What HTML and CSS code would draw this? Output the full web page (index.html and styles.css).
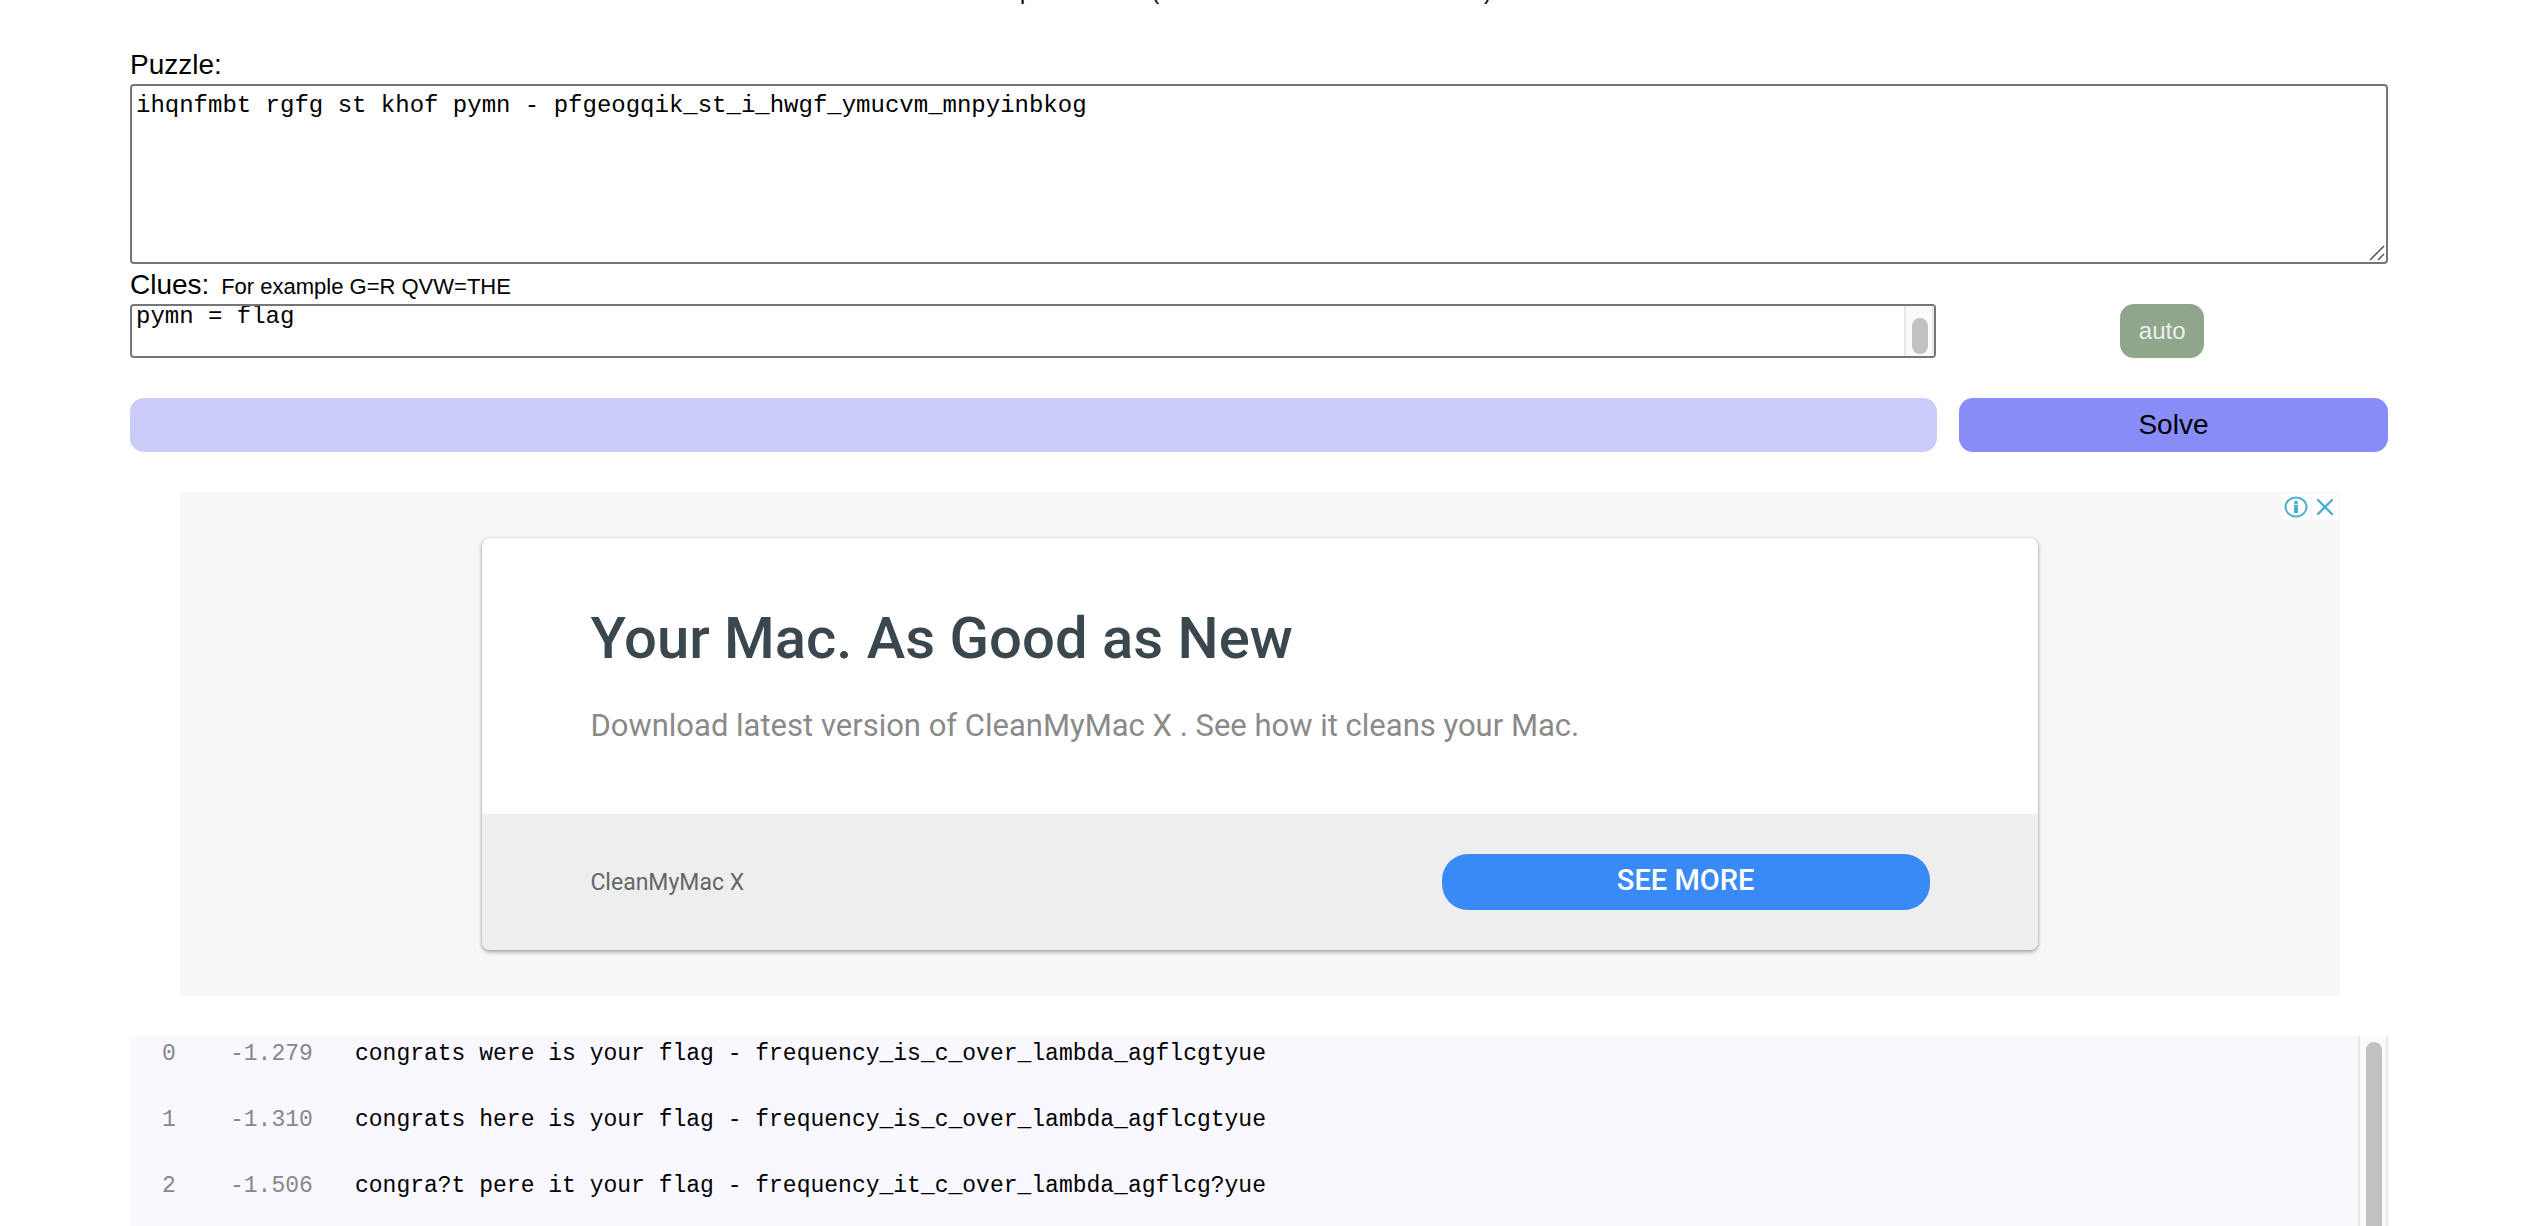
FILE: index.html
```html
<!DOCTYPE html>
<html lang="en">
<head>
<meta charset="utf-8">
<meta name="viewport" content="width=device-width, initial-scale=1">
<title>Cryptogram solver</title>
<link rel="stylesheet" href="styles.css">
</head>
<body>
<main class="page">
  <header class="intro"><p class="intro-text">patristocrats (inwhi chwor dboun darie saren t).</p></header>

  <form class="solver">
    <label class="label" for="puzzle">Puzzle:</label>
    <div class="field">
      <textarea class="input input-puzzle" id="puzzle" spellcheck="false">ihqnfmbt rgfg st khof pymn - pfgeogqik_st_i_hwgf_ymucvm_mnpyinbkog</textarea>
      <svg class="grip" viewBox="0 0 16 16" aria-hidden="true"><path d="M1 15 15 1M9 15l6-6" fill="none" stroke="#555" stroke-width="1.500"/></svg>
    </div>
    <label class="label" for="clues">Clues: <span class="hint">For example G=R QVW=THE</span></label>
    <div class="clue-row">
      <div class="field">
        <textarea class="input input-clues" id="clues" spellcheck="false">pymn = flag</textarea>
        <span class="scroll scroll-clues" aria-hidden="true"><span class="thumb"></span></span>
      </div>
      <button class="auto" type="button">auto</button>
    </div>
    <div class="solve-row">
      <div class="progress" role="progressbar" aria-label="Progress"></div>
      <button class="solve" type="button">Solve</button>
    </div>
  </form>

  <aside class="ad">
    <div class="ad-tools">
      <button class="ad-tool" type="button" aria-label="Ad information"><svg viewBox="0 0 28 26"><ellipse cx="14" cy="13" rx="10.500" ry="9.500" fill="none" stroke="#4bb0ce" stroke-width="2"/><circle cx="14" cy="8.500" r="2" fill="#4bb0ce"/><path d="M12 11h4v8h-4z" fill="#4bb0ce"/></svg></button>
      <button class="ad-tool ad-close" type="button" aria-label="Close ad"><svg viewBox="0 0 26 26"><path d="M6 6l14 14M20 6 6 20" fill="none" stroke="#4bb0ce" stroke-width="2.400" stroke-linecap="round"/></svg></button>
    </div>
    <div class="card">
      <div class="card-body">
        <h2 class="card-title">Your Mac. As Good as New</h2>
        <p class="card-text">Download latest version of CleanMyMac X . See how it cleans your Mac.</p>
      </div>
      <div class="card-foot">
        <span class="brand">CleanMyMac X</span>
        <a class="more" href="#">SEE MORE</a>
      </div>
    </div>
  </aside>

  <section class="results">
    <table class="table">
      <tr><td class="rank">0</td><td class="score">-1.279</td><td>congrats were is your flag - frequency_is_c_over_lambda_agflcgtyue</td></tr>
      <tr><td class="rank">1</td><td class="score">-1.310</td><td>congrats here is your flag - frequency_is_c_over_lambda_agflcgtyue</td></tr>
      <tr><td class="rank">2</td><td class="score">-1.506</td><td>congra?t pere it your flag - frequency_it_c_over_lambda_agflcg?yue</td></tr>
    </table>
    <span class="scroll scroll-results" aria-hidden="true"><span class="thumb"></span></span>
  </section>
</main>
</body>
</html>
```

FILE: styles.css
```css
* { box-sizing: border-box; }

body {
  margin: 0;
  background: #fff;
  color: #000;
  font-family: "Liberation Sans", Arial, sans-serif;
  font-size: 28px;
}

.page {
  display: flex;
  flex-direction: column;
  height: 100vh;
  padding: 0 156px 0 130px;
  overflow: hidden;
}

/* Only the tail of the introduction shows at this scroll position. */
.intro {
  display: flex;
  flex: none;
  align-items: flex-end;
  justify-content: center;
  height: 4px;
  margin-bottom: 44px;
  overflow: hidden;
}
.intro-text { margin: 0; font-size: 23px; line-height: 26px; }

.solver { flex: none; }
.label { display: block; height: 36px; line-height: 34px; }
.label[for="clues"] { height: 40px; padding-top: 4px; }
.hint { margin-left: 4px; font-size: 22px; }

.field { position: relative; display: flex; }
.input {
  display: block;
  width: 100%;
  margin: 0;
  border: 2px solid #767676;
  border-radius: 4px;
  background: #fff;
  color: #000;
  font-family: "Liberation Mono", "Courier New", monospace;
  font-size: 24px;
  resize: none;
  overflow: hidden;
}
.input-puzzle { height: 180px; padding: 6px 4px; line-height: 28px; }
.input-clues { height: 54px; padding: 0 4px; line-height: 22px; }
.grip { position: absolute; right: 3px; bottom: 3px; width: 16px; height: 16px; }

.scroll {
  position: absolute;
  display: flex;
  border: 2px solid #e8e8e8;
  border-width: 0 2px;
  background: #fafafa;
}
.scroll .thumb { width: 16px; border-radius: 8px; background: #c1c1c1; }
.scroll-clues { top: 2px; right: 2px; bottom: 2px; padding: 12px 4px 2px 6px; }
.scroll-results { top: 0; right: 0; bottom: -8px; padding: 6px 4px 0 6px; }

.clue-row { display: grid; grid-template-columns: 80fr 20fr; }
.auto, .solve { border: 0; border-radius: 14px; font-family: inherit; }
.auto {
  justify-self: center;
  width: 84px;
  background: #8fa68c;
  color: #eee;
  font-size: 24px;
}

.solve-row {
  display: grid;
  grid-template-columns: 80fr 19fr;
  gap: 22px;
  height: 54px;
  margin: 40px 0;
}
.progress { border-radius: 14px; background: #ccccfb; }
.solve { background: #888cf7; color: #000; font-size: 28px; }

.ad {
  position: relative;
  flex: none;
  margin: 0 48px 40px 50px;
  padding: 46px 0;
  background: #f7f7f7;
  font-family: Roboto, sans-serif;
}
.ad-tools { position: absolute; top: 2px; right: 2px; display: flex; gap: 2px; }
.ad-tool { width: 28px; height: 26px; padding: 0; border: 0; background: #fff; }
.ad-close { width: 26px; }
.ad-tool svg { display: block; width: 100%; }

.card {
  margin: 0 14%;
  border-radius: 8px;
  background: #fff;
  box-shadow: 0 2px 4px rgba(0, 0, 0, .35), 0 0 2px rgba(0, 0, 0, .15);
  overflow: hidden;
}
.card-body { height: 276px; padding: 64px 108px 0; }
.card-title { margin: 0 0 24px; color: #3a474e; font-size: 58px; font-weight: 500; line-height: 72px; }
.card-text { margin: 0; color: #8a8a8a; font-size: 31px; line-height: 56px; }
.card-foot {
  display: flex;
  align-items: center;
  justify-content: space-between;
  height: 136px;
  padding: 0 108px;
  background: #eee;
}
.brand { color: #666; font-size: 23px; }
.more {
  width: 488px;
  border-radius: 26px;
  background: #398af7;
  color: #fff;
  font-size: 29px;
  font-weight: 500;
  line-height: 52px;
  height: 56px;
  text-align: center;
  text-decoration: none;
}

.results {
  position: relative;
  flex: 1;
  min-height: 0;
  background: #f9f8ff;
}
.table {
  border-collapse: collapse;
  font-family: "Liberation Mono", "Courier New", monospace;
  font-size: 23px;
  line-height: 36px;
}
.table td { height: 66px; padding: 0; vertical-align: top; white-space: pre; }
.table .rank { width: 100px; padding-left: 32px; color: #888; }
.table .score { width: 125px; color: #888; }
```
